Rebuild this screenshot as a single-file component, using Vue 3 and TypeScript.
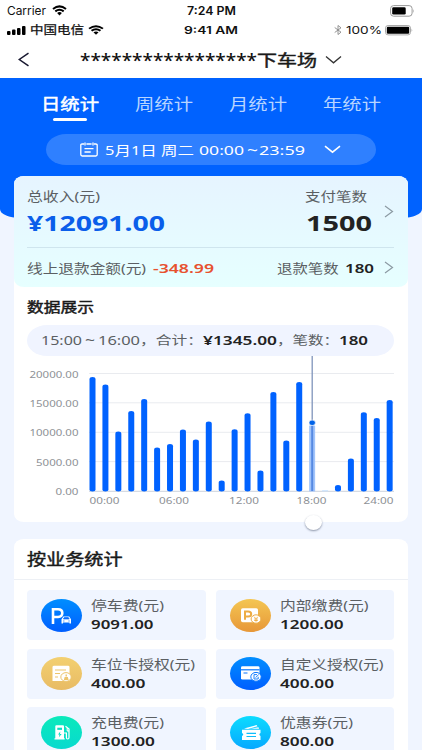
<script setup lang="ts">
import { h, type FunctionalComponent } from 'vue'

interface WideTextProps { t: string; w: number; s: number }

const WideText: FunctionalComponent<WideTextProps> = (p) =>
  h('svg', { class: 'wide', width: p.w, height: 18 }, [
    h('text', { x: 0, y: 9 + p.s * 0.365, 'font-size': p.s, textLength: p.w, lengthAdjust: 'spacingAndGlyphs' }, p.t),
  ])
WideText.props = ['t', 'w', 's']

const tabs = ['日统计', '周统计', '月统计', '年统计']

const base = 491
const tops = [377, 384.5, 431.5, 411, 399, 447.5, 444, 429.5, 439.5, 421.5, 480.5, 429.3, 413.3, 470.5, 392, 440.5, 382, 425.5, 490.6, 485, 458.5, 412.3, 418, 400]
const bars = tops.map((top, i) => ({ x: 62.5 + i * 12.92, y: top - 360, h: base - top + 0.5, on: i === 17, empty: i === 18 }))
const yAxis = [
  { t: '20000.00', w: 49, y: 13.5 },
  { t: '15000.00', w: 49, y: 42.8 },
  { t: '10000.00', w: 49, y: 72.3 },
  { t: '5000.00', w: 42.5, y: 101.6 },
  { t: '0.00', w: 23, y: 131.3 },
]
const xAxis = [
  { t: '00:00', x: 62.5 },
  { t: '06:00', x: 132 },
  { t: '12:00', x: 202 },
  { t: '18:00', x: 269.5 },
  { t: '24:00', x: 336.5 },
]

const items = [
  { icon: 'park', label: '停车费(元)', lw: 73, value: '9091.00', vw: 62.5 },
  { icon: 'inner', label: '内部缴费(元)', lw: 88.5, value: '1200.00', vw: 63.5 },
  { icon: 'permit', label: '车位卡授权(元)', lw: 104, value: '400.00', vw: 54.5 },
  { icon: 'custom', label: '自定义授权(元)', lw: 103.5, value: '400.00', vw: 54 },
  { icon: 'charge', label: '充电费(元)', lw: 73, value: '1300.00', vw: 64 },
  { icon: 'coupon', label: '优惠券(元)', lw: 73, value: '800.00', vw: 54 },
]
</script>

<template>
  <main class="app">
    <header class="status first">
      <div class="side">
        <WideText class="sys" t="Carrier" :w="39" :s="12" />
        <svg class="wifi" width="15" height="11" viewBox="0 0 15 11"><path d="M1 4Q7.5-1.2 14 4M3.3 6.4Q7.5 3 11.7 6.4" /><path class="solid" d="M5.1 8Q7.5 6.1 9.9 8L7.5 10.6Z" /></svg>
      </div>
      <WideText class="sys bold" t="7:24 PM" :w="49" :s="11.5" />
      <div class="side right">
        <svg width="25" height="12" viewBox="0 0 25 12"><rect x=".6" y=".6" width="21.5" height="10.6" rx="3" fill="none" stroke="#999" /><rect x="2.2" y="2.2" width="13.5" height="7.4" rx="1.3" /><path d="M23.3 4v4q1.4-2 0-4" fill="#999" /></svg>
      </div>
    </header>
    <div class="status second">
      <div class="side">
        <svg class="signal" width="19" height="9" viewBox="0 0 19 9"><rect x="0" y="5" width="3.5" height="4" rx="1" /><rect x="5" y="3.5" width="3.5" height="5.5" rx="1" /><rect x="10" y="2" width="3.5" height="7" rx="1" /><rect x="15" y="0" width="3.5" height="9" rx="1" /></svg>
        <WideText class="sys semi" t="中国电信" :w="54" :s="11.5" />
        <svg class="wifi two" width="16" height="10" viewBox="0 0 15 11" preserveAspectRatio="none"><path d="M1 4Q7.5-1.2 14 4M3.3 6.4Q7.5 3 11.7 6.4" /><path class="solid" d="M5.1 8Q7.5 6.1 9.9 8L7.5 10.6Z" /></svg>
      </div>
      <WideText class="sys bold" t="9:41 AM" :w="54" :s="10" />
      <div class="side right">
        <svg class="bt" width="8" height="10" viewBox="0 0 8 10"><path d="M.7 2.5 7 7.2 4 9.5V.5L7 2.8.7 7.5" /></svg>
        <WideText class="sys" t="100%" :w="36" :s="10.2" />
        <svg class="bat" width="28" height="11" viewBox="0 0 28 11"><rect x=".5" y=".5" width="25" height="9.4" rx="2.6" fill="none" stroke="#aaa" /><rect x="1.8" y="1.7" width="22.4" height="7" rx="1.2" /><path d="M26.6 3.5v3.4q1.4-1.7 0-3.4" fill="#999" /></svg>
      </div>
    </div>

    <nav class="nav">
      <svg class="back" width="12" height="15" viewBox="0 0 12 15"><path d="M10.5 1.2 1.3 7.5l9.2 6.3" /></svg>
      <WideText class="stars" t="*****************" :w="177" :s="17.5" />
      <WideText class="medium" t="下车场" :w="60" :s="15.5" />
      <svg class="drop" width="17" height="10" viewBox="0 0 17 10"><path d="m1 1.5 7.5 6.3L16 1.5" /></svg>
    </nav>

    <section class="hero">
      <div class="tabs">
        <div v-for="(tab, i) in tabs" :key="tab" class="tab" :class="{ active: i === 0 }">
          <WideText :t="tab" :w="58" :s="15.5" />
        </div>
      </div>
      <div class="date">
        <svg class="cal" width="18" height="15" viewBox="0 0 18 15"><path d="M4 2H2.2Q.8 2 .8 3.3V12.6Q.8 14 2.2 14H15.8Q17.2 14 17.2 12.6V3.3Q17.2 2 15.8 2H14M6.4 2h5.2M5 .5V3.6M13 .5V3.6M4.5 6.7h9M4.5 10h6.2" /></svg>
        <WideText t="5月1日 周二" :w="89" :s="12.8" />
        <WideText class="clock" t="00:00" :w="45" :s="12.8" />
        <WideText class="tilde" t="~" :w="11" :s="14" />
        <WideText class="clock2" t="23:59" :w="46" :s="12.8" />
        <svg class="down" width="17" height="9" viewBox="0 0 17 9"><path d="m1 1.2 7.5 6L16 1.2" /></svg>
      </div>
    </section>

    <section class="card overview">
      <div class="summary">
        <div class="income">
          <div class="stack">
            <WideText class="muted" t="总收入(元)" :w="73" :s="12.8" />
            <WideText class="money" t="¥12091.00" :w="138" :s="21.5" />
          </div>
          <div class="stack end">
            <WideText class="muted count" t="支付笔数" :w="62" :s="12.8" />
            <WideText class="big" t="1500" :w="66" :s="21.5" />
          </div>
          <svg class="go" width="10" height="13" viewBox="0 0 10 13"><path d="m1 1 7.5 5.5L1 12" /></svg>
        </div>
        <div class="refund">
          <WideText class="muted" t="线上退款金额(元)" :w="119" :s="12.8" />
          <WideText class="neg" t="-348.99" :w="61" :s="13" />
          <WideText class="muted rlabel" t="退款笔数" :w="61.5" :s="12.8" />
          <WideText class="num r180" t="180" :w="29" :s="13" />
          <svg class="go" width="10" height="13" viewBox="0 0 10 13"><path d="m1 1 7.5 5.5L1 12" /></svg>
        </div>
      </div>

      <div class="heading"><WideText class="medium" t="数据展示" :w="67" :s="13.8" /></div>
      <div class="info">
        <WideText class="muted" t="15:00" :w="41" :s="12.5" />
        <WideText class="muted mid" t="~" :w="10" :s="13.5" />
        <WideText class="muted" t="16:00" :w="42" :s="12.5" />
        <WideText class="muted" t="，合计：" :w="63" :s="12.5" />
        <WideText class="num" t="¥1345.00" :w="74" :s="13" />
        <WideText class="muted" t="，笔数：" :w="62" :s="12.5" />
        <WideText class="num" t="180" :w="29" :s="13" />
      </div>

      <svg class="chart" width="368" height="156" viewBox="0 0 368 156">
        <g v-for="(a, i) in yAxis" :key="a.t">
          <line x1="62" x2="367" :y1="a.y" :y2="a.y" :stroke="i === 4 ? '#ccd2dc' : '#e9ebef'" />
          <text :x="51.5 - a.w" :y="a.y + 4" :textLength="a.w" lengthAdjust="spacingAndGlyphs">{{ a.t }}</text>
        </g>
        <template v-for="(b, i) in bars" :key="i">
          <rect v-if="!b.empty" :x="b.x" :y="b.y" width="6" :height="b.h" :rx="b.on ? 0.5 : 3" :ry="b.on ? 0.5 : 2.2" :class="{ on: b.on }" />
          <rect v-else :x="b.x" :y="b.y - 0.3" width="6" height="1" class="none" />
        </template>
        <line x1="285.2" x2="285.2" y1="-4" y2="60" class="needle" />
        <line x1="285.2" x2="285.2" y1="66" y2="131" class="core" />
        <ellipse cx="285.2" cy="62.8" rx="3.2" ry="2.7" class="dot" />
        <text v-for="a in xAxis" :key="a.t" :x="a.x" y="144" textLength="30" lengthAdjust="spacingAndGlyphs">{{ a.t }}</text>
      </svg>
      <i class="handle"></i>
    </section>

    <section class="card business">
      <div class="title"><WideText class="medium" t="按业务统计" :w="95.5" :s="15.6" /></div>
      <div class="grid">
        <article v-for="it in items" :key="it.label" class="item">
          <span class="badge" :class="it.icon">
            <svg width="41" height="33" viewBox="0 0 41 33" fill="none" stroke="#fff">
              <g v-if="it.icon === 'park'">
                <path d="M12 25V10.2H17Q21.3 10.2 21.3 14T17 18H12" stroke-width="2.6" />
                <path d="M20.5 20.3 22.4 17.4H28.2L30 20.3V24.5H28.5V23.5H22V24.5H20.5Z" fill="#fff" stroke="none" />
                <path d="M22.4 20 23.3 18.5H27.3L28.2 20ZM22 22h1.5m3.8 0h1.5" fill="#0b6fff" stroke="#0b6fff" stroke-width=".7" />
              </g>
              <g v-else-if="it.icon === 'inner'">
                <rect x="11" y="9.3" width="17" height="14" rx="1.7" fill="#fff" stroke="none" />
                <path d="M15 20.8V12.5h3.1Q21.2 12.5 21.2 15T18.1 17.5H15" stroke="#edac43" stroke-width="2" />
                <ellipse cx="26" cy="20" rx="4.9" ry="4.2" fill="#fff" stroke="#edac43" />
                <path d="m24 17.7 2 2 2-2M26 19.7v3M24.2 20h3.6M24.2 21.5h3.6" stroke="#edac43" stroke-width=".9" />
              </g>
              <g v-else-if="it.icon === 'permit'">
                <path d="M13 8.8H27Q28.5 8.8 28.5 10V24H11.5V10Q11.5 8.8 13 8.8Z" fill="#fff" stroke="none" />
                <path d="M14 13h11M14 16.5h5M14 20h3" stroke="#edc56c" stroke-width="1.2" />
                <ellipse cx="25" cy="20" rx="5.2" ry="4.4" fill="#fff" stroke="#edc56c" />
                <path d="M23 22.2h4.5M25.2 17.5v2M23.5 20.7h3.5" stroke="#edc56c" stroke-width="1.4" />
              </g>
              <g v-else-if="it.icon === 'custom'">
                <path d="M12.5 9.3H28Q29.5 9.3 29.5 10.5V22.5H12.5Q11 22.5 11 21.3V10.5Q11 9.3 12.5 9.3Z" fill="#fff" stroke="none" />
                <path d="M11 12.8h18.5" stroke="#0876ff" stroke-width="1.2" />
                <path d="M13.5 16h4" stroke="#0876ff" />
                <ellipse cx="26" cy="19.8" rx="5.2" ry="4.4" fill="#fff" stroke="#0876ff" />
                <path d="M27 17.6H24V22h4.2v-2.2M25.5 20.6l3.2-3" stroke="#0876ff" stroke-width=".9" />
              </g>
              <g v-else-if="it.icon === 'charge'">
                <path d="M15.3 9.3H22Q23 9.3 23 10.2V22.2h.7v1.3H13.5v-1.3h.8V10.2Q14.3 9.3 15.3 9.3Z" fill="#fff" stroke="none" />
                <path d="M16.3 11.7h4.7v2.2h-4.7z" fill="#09dfc6" stroke="none" />
                <path d="m19.3 15.5-2.3 3h1.5l-.6 2.8 2.8-3.4H19Z" fill="#09dfc6" stroke="none" />
                <path d="M24.5 10.3 28 13v8.5Q28 23 26.7 23T25.4 21.5V17H23" stroke-width="1.2" />
                <path d="M26.2 12v3H28" />
              </g>
              <g v-else>
                <path d="M14 12.6 26.5 9 27.5 10.2 18 13ZM20 12.8l8.5-1.6.6 1.5Z" fill="#fff" stroke="none" />
                <path d="M12 13.7H30.5V17Q28.2 18.5 30.5 20V24H12V20Q14.5 18.5 12 17Z" fill="#fff" stroke="none" />
                <path d="M16.5 17.3H26M16.5 20.5H26" stroke="#0dbdfb" stroke-width="1.2" />
              </g>
            </svg>
          </span>
          <div class="texts">
            <WideText class="muted" :t="it.label" :w="it.lw" :s="12.8" />
            <WideText class="num" :t="it.value" :w="it.vw" :s="13.2" />
          </div>
        </article>
      </div>
    </section>
  </main>
</template>

<style>
body { margin: 0; overflow: hidden; }
</style>

<style scoped>
.app { box-sizing: border-box; width: 422px; height: 750px; overflow: hidden; background: #f0f5ff; font-family: "Noto Sans", "Noto Sans CJK SC", sans-serif; color: #222; }
.wide { display: block; flex: none; overflow: visible; fill: currentColor; }
.sys { font-family: Inter, "Noto Sans CJK SC", sans-serif; color: #111; }
.semi { stroke: #111; stroke-width: .25; }
.bold { font-weight: 600; }
.medium { font-family: "Noto Sans CJK SC", sans-serif; font-weight: 400; color: #1a1a1a; stroke: #1a1a1a; stroke-width: .45; }
.muted { color: #5b5f63; }
.num { font-weight: 600; }
.status { display: flex; align-items: center; justify-content: space-between; box-sizing: border-box; padding: 0 7px; background: #fff; }
.first { height: 21px; }
.second { height: 19px; padding-bottom: 1px; }
.side { display: flex; align-items: center; width: 150px; }
.right { justify-content: flex-end; }
.wifi { margin-left: 6px; fill: none; stroke: #000; stroke-width: 2; }
.wifi.two { margin-left: 4px; }
.wifi .solid { fill: #000; stroke: none; }
.signal { margin-right: 4px; }
.bt { margin-right: 4px; fill: none; stroke: #888; stroke-width: .9; }
.bat { margin: 0 2px 0 3px; }
.nav { display: flex; align-items: center; height: 38px; padding-left: 18px; background: #fff; }
.nav .medium { margin-top: 2px; }
.back { margin-right: 50px; fill: none; stroke: #181830; stroke-width: 1.5; }
.stars { margin-top: 3px; color: #111; font-weight: 500; }
.drop { margin: 2px 0 0 8px; fill: none; stroke: #333; stroke-width: 1.3; }
.hero { box-sizing: border-box; height: 140px; background: #0062ff; border-radius: 0 0 20px 20px / 0 0 9px 9px; color: #fff; }
.tabs { display: flex; justify-content: space-between; padding: 17px 41.5px 0 40.5px; height: 39px; }
.tab { color: #b8d5ff; font-family: "Noto Sans CJK SC", sans-serif; }
.tab.active { color: #fff; stroke: #fff; stroke-width: .45; }
.tab.active::after { content: ""; display: block; width: 34px; height: 3px; margin: 4.5px auto 0; border-radius: 2px; background: #fff; }
.date { display: flex; align-items: center; box-sizing: border-box; width: 330px; height: 31px; margin: 0 auto; padding-left: 34px; border-radius: 20px / 15.5px; background: #2f80ff; }
.cal { margin-right: 7px; fill: none; stroke: #fff; stroke-width: 1.3; }
.clock { margin-left: 5px; }
.tilde { margin-left: 3px; }
.clock2 { margin-left: 1px; }
.down { margin-left: 19px; fill: none; stroke: #fff; stroke-width: 1.6; }
.card { width: 394px; margin-left: 14px; border-radius: 10px / 8px; background: #fff; }
.overview { height: 346px; margin-top: -42px; }
.summary { box-sizing: border-box; height: 111px; padding: 11px 14px 0 13px; border-radius: 10px / 8px; background: linear-gradient(#e6f4ff, #e6ffff); }
.income { display: flex; height: 60px; border-bottom: 1px solid #cfe5ee; align-items: flex-start; }
.stack { display: flex; flex-direction: column; gap: 9px; }
.stack.end { align-items: flex-end; margin-left: auto; }
.count { margin-right: 5px; }
.money { color: #0a5eea; font-weight: 700; }
.big { font-weight: 700; }
.go { margin-left: 12px; flex: none; fill: none; stroke: #8c9aa3; stroke-width: 1.2; }
.income .go { margin-top: 18px; }
.refund { display: flex; align-items: center; height: 39px; }
.neg { margin-left: 7px; color: #e7512f; font-weight: 600; }
.rlabel { margin-left: auto; }
.r180 { margin-left: 7px; }
.refund .go { margin-left: 10px; }
.heading { display: flex; padding: 11px 13px 9px; }
.info { display: flex; align-items: center; box-sizing: border-box; width: 367px; height: 31px; margin-left: 13px; padding-left: 14px; border-radius: 20px / 15.5px; background: #f0f4ff; }
.info .wide { position: relative; top: -.5px; }
.mid { margin: 0 3px; }
.chart { display: block; margin: 4px 0 0 13px; overflow: visible; font-size: 9px; font-family: "Noto Sans", sans-serif; }
.chart text { fill: #8e9196; }
.chart rect { fill: #0062ff; }
.chart rect.on { fill: #a1c4fb; }
.chart rect.none { fill: #c5e1ff; }
.needle { stroke: #7f94bb; stroke-width: 1.3; }
.core { stroke: #5589e2; stroke-width: 2; }
.dot { fill: #0062e8; stroke: #fff; stroke-width: .6; }
.handle { position: relative; z-index: 1; display: block; width: 17px; height: 15px; margin: -1px 0 0 290.5px; border-radius: 50%; background: #fff; box-shadow: 0 1px 2px #8c95a8; }
.business { height: 230px; margin-top: 17px; }
.title { display: flex; align-items: center; box-sizing: border-box; height: 41px; padding-left: 13px; border-bottom: 1px solid #edf0f5; }
.grid { display: grid; grid-template-columns: 179px 178px; grid-auto-rows: 50px; gap: 8.5px 10px; padding: 10px 13px; }
.item { display: flex; align-items: center; border-radius: 4px; background: #f0f5ff; }
.badge { width: 41px; height: 33px; margin: 0 9.5px 0 13.5px; border-radius: 50%; flex: none; }
.badge svg { display: block; }
.park, .custom { background: linear-gradient(#008eff, #005eff); }
.inner { background: linear-gradient(#f4c653, #e79738); }
.permit { background: linear-gradient(#f3d071, #e8bb64); }
.charge { background: linear-gradient(#0beabb, #07d9cf); }
.coupon { background: linear-gradient(#0bdcff, #07a8ff); }
.texts { display: flex; flex-direction: column; gap: 1px; margin-top: -1px; }
</style>
